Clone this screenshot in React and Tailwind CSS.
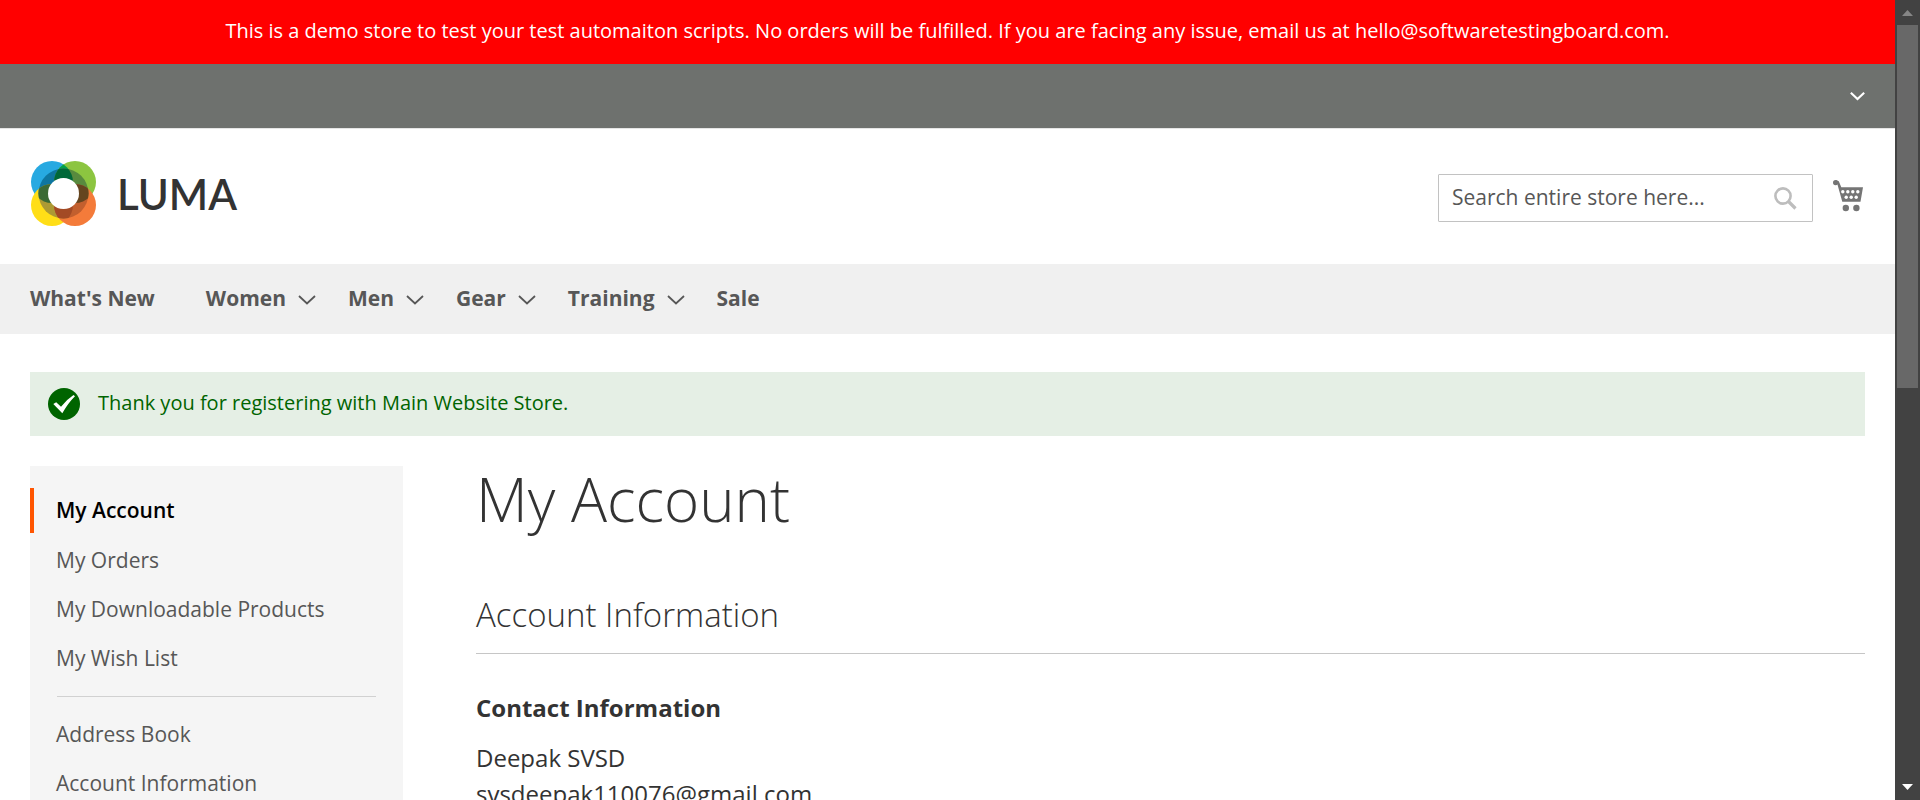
import React from "react";

const NAV = [
  { label: "What's New", menu: false },
  { label: "Women", menu: true },
  { label: "Men", menu: true },
  { label: "Gear", menu: true },
  { label: "Training", menu: true },
  { label: "Sale", menu: false },
];

function Chevron({ className, strokeWidth = 1.8 }) {
  return (
    <svg viewBox="0 0 18 12" className={className} fill="none" stroke="currentColor" aria-hidden="true">
      <path d="M1 2 L9 9.500 L17 2" strokeWidth={strokeWidth} />
    </svg>
  );
}

function LumaMark() {
  return (
    <svg viewBox="0 0 65 65" className="h-[65px] w-[65px]" aria-hidden="true">
      <defs>
        <clipPath id="tl"><circle cx="21" cy="21" r="21" /></clipPath>
        <clipPath id="tr"><circle cx="44" cy="21" r="21" /></clipPath>
        <clipPath id="bl"><circle cx="21" cy="44" r="21" /></clipPath>
        <clipPath id="br"><circle cx="44" cy="44" r="21" /></clipPath>
      </defs>
      <circle cx="21" cy="21" r="21" fill="#27a9e1" />
      <circle cx="44" cy="21" r="21" fill="#8cc540" />
      <circle cx="21" cy="44" r="21" fill="#ffde17" />
      <circle cx="44" cy="44" r="21" fill="#f47b3a" />
      <circle cx="44" cy="21" r="21" fill="#00a04b" clipPath="url(#tl)" />
      <g clipPath="url(#tl)"><circle cx="32.5" cy="32.5" r="25" fill="#0e76a0" /></g>
      <g clipPath="url(#tr)"><circle cx="32.5" cy="32.5" r="25" fill="#588a3e" /></g>
      <g clipPath="url(#bl)"><circle cx="32.5" cy="32.5" r="25" fill="#ac9a34" /></g>
      <g clipPath="url(#br)"><circle cx="32.5" cy="32.5" r="25" fill="#c25f2e" /></g>
      <g clipPath="url(#tl)"><g clipPath="url(#tr)"><circle cx="32.5" cy="32.5" r="25" fill="#006838" /></g></g>
      <g clipPath="url(#tl)"><g clipPath="url(#bl)"><circle cx="32.5" cy="32.5" r="25" fill="#3b6a35" /></g></g>
      <g clipPath="url(#tr)"><g clipPath="url(#br)"><circle cx="32.5" cy="32.5" r="25" fill="#65451f" /></g></g>
      <g clipPath="url(#bl)"><g clipPath="url(#br)"><circle cx="32.5" cy="32.5" r="25" fill="#a34a25" /></g></g>
      <circle cx="32.5" cy="32.5" r="15.5" fill="#fff" />
    </svg>
  );
}

function CartIcon() {
  return (
    <svg viewBox="0 0 30 32" className="h-8 w-[30px]" fill="#757575" aria-hidden="true">
      <circle cx="2.6" cy="2.6" r="2.6" />
      <path d="M2.600 0 L5.800 1.200 L8.300 7.300 H30 L27.500 21.800 H9.300 L4.600 5 Z" />
      <circle cx="12.8" cy="28" r="3.2" />
      <circle cx="23.4" cy="28" r="3.2" />
      <g fill="#fff">
        <circle cx="9.8" cy="11.8" r="1.7" />
        <circle cx="14.8" cy="11.8" r="1.7" />
        <circle cx="19.8" cy="11.8" r="1.7" />
        <circle cx="24.800" cy="11.8" r="1.7" />
        <circle cx="13.2" cy="17.2" r="1.7" />
        <circle cx="18.2" cy="17.2" r="1.7" />
        <circle cx="23.2" cy="17.2" r="1.7" />
      </g>
    </svg>
  );
}

function SideLink({ children }) {
  return (
    <li>
      <a href="#" className="block py-2 pl-[26px] leading-[33px]">{children}</a>
    </li>
  );
}

export default function App() {
  return (
    <div className="flex h-screen overflow-hidden bg-white font-['Open_Sans',sans-serif] text-[21px] text-[#333]">
      <div className="min-w-0 flex-1 overflow-hidden">
        <p className="bg-[#ff0000] px-4 pt-4 pb-[18px] text-center text-[20px] leading-[30px] text-white">
          This is a demo store to test your test automaiton scripts. No orders will be fulfilled. If you are facing any issue, email us at hello@softwaretestingboard.com.
        </p>
        <div className="flex h-16 items-center justify-end bg-[#6e716e] px-[30px] text-white">
          <button type="button" aria-label="Customer menu">
            <Chevron className="h-[10px] w-[15px]" strokeWidth={2.6} />
          </button>
        </div>
        <header className="flex items-start justify-between border-t border-[#e5e5e5] pt-8 pr-8 pb-[38px] pl-[31px]">
          <a href="#" className="flex items-center gap-[21px] font-['Lato',sans-serif] text-[42px] leading-none font-semibold text-[#333]">
            <LumaMark />
            LUMA
          </a>
          <div className="flex items-center gap-5 pt-[13px]">
            <form className="flex h-12 w-[375px] items-center rounded-[1px] border border-[#c2c2c2] pr-[15px] pl-[13px]">
              <input aria-label="Search" placeholder="Search entire store here..." className="min-w-0 flex-1 outline-none placeholder:text-[#575757]" />
              <button type="button" aria-label="Search the store" className="text-[#bdbdbd]">
                <svg viewBox="0 0 23 23" className="h-[23px] w-[23px]" fill="none" stroke="currentColor" aria-hidden="true">
                  <circle cx="9" cy="9" r="7.600" strokeWidth="2.600" />
                  <path d="M14.500 14.500 L21.500 21.500" strokeWidth="3.200" />
                </svg>
              </button>
            </form>
            <a href="#" aria-label="My Cart" className="pb-1"><CartIcon /></a>
          </div>
        </header>
        <nav className="flex h-[70px] items-center bg-[#f0f0f0] px-[30px] font-bold text-[#575757]">
          {NAV.map((item) => (
            <a href="#" key={item.label} className={item.menu ? "mr-8 flex items-center gap-3" : "mr-[51px]"}>
              {item.label}
              {item.menu && <Chevron className="mt-[2px] h-3 w-[18px]" />}
            </a>
          ))}
        </nav>
        <div className="px-[30px] pt-[38px]">
          <div role="status" className="flex h-16 items-center gap-[18px] bg-[#e5efe5] pl-[18px] text-[20px] text-[#006400]">
            <svg viewBox="0 0 32 32" className="h-8 w-8 shrink-0" aria-hidden="true">
              <circle cx="16" cy="16" r="16" fill="#006400" />
              <path d="M5.300 16 L8.200 14.200 L13 18.800 Q18 12 25.500 7 L27 8.200 Q20 15 14.300 25.300 Z" fill="#fff" />
            </svg>
            <p className="pb-[3px]">Thank you for registering with Main Website Store.</p>
          </div>
          <div className="mt-[30px] flex gap-[73px]">
            <aside className="w-[373px] shrink-0 bg-[#f5f5f5] pt-[22px] pb-6 text-[#575757]">
              <ul>
                <li className="mb-[3px] border-l-4 border-[#ff5501] pl-[22px] leading-[45px] font-semibold text-black">My Account</li>
                <SideLink>My Orders</SideLink>
                <SideLink>My Downloadable Products</SideLink>
                <SideLink>My Wish List</SideLink>
                <li className="mx-[27px] my-[13px] border-t border-[#d1d1d1]" />
                <SideLink>Address Book</SideLink>
                <SideLink>Account Information</SideLink>
              </ul>
            </aside>
            <main className="min-w-0 flex-1">
              <h1 className="text-[60px] leading-[66px] font-light">My Account</h1>
              <h2 className="mt-[65px] border-b border-[#c6c6c6] pb-5 text-[33px] leading-9 font-light">Account Information</h2>
              <h3 className="mt-9 text-[24px] leading-9 font-bold">Contact Information</h3>
              <p className="mt-[14px] text-[24px] leading-9">Deepak SVSD<br />svsdeepak110076@gmail.com</p>
            </main>
          </div>
        </div>
      </div>
      <div aria-hidden="true" className="flex w-[25px] shrink-0 flex-col items-center bg-[#424242] pr-px">
        <svg viewBox="0 0 11 6" className="mt-[10px] mb-[9px] h-[6px] w-[11px] shrink-0" fill="#868686"><path d="M0 6 L5.500 0 L11 6 Z" /></svg>
        <div className="h-[363px] w-[21px] shrink-0 bg-[#686868]" />
        <svg viewBox="0 0 11 6" className="mt-auto mb-[10px] h-[6px] w-[11px] shrink-0" fill="#fff"><path d="M0 0 L5.500 6 L11 0 Z" /></svg>
      </div>
    </div>
  );
}
